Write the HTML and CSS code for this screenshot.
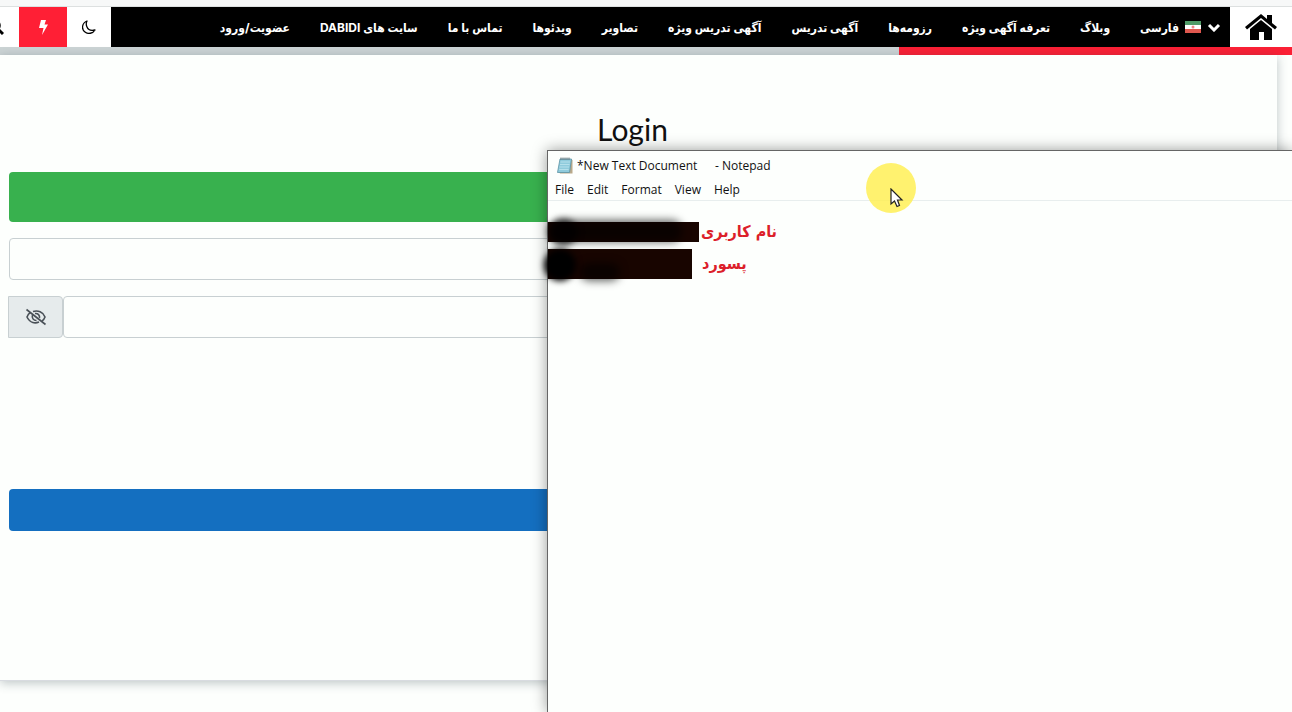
FILE: index.html
```
<!DOCTYPE html>
<html lang="fa">
<head>
	<meta charset="UTF-8">
	<title>Login</title>
	<link rel="stylesheet" href="styles.css">
</head>
<body>
	<div class="topline"></div>
	<header class="header" dir="rtl">
		<a class="home" href="#" aria-label="خانه">
			<svg width="32" height="26" viewBox="0 0 32 26">
				<path d="M5 15 L16 6 L27 15 V26 H19 V18 H14 V26 H5 Z"/>
				<path d="M16 0 L22 5 V1 H27 V9 L32 13 L30 15.500 L16 4 L2 15.500 L0 13 Z"/>
			</svg>
		</a>
		<nav class="nav">
			<button class="lang" type="button">
				<svg width="14" height="9" viewBox="0 0 14 9"><path d="M2 2 L7 7 L12 2" fill="none" stroke="#fff" stroke-width="3"/></svg>
				<svg width="16" height="12" viewBox="0 0 16 12">
					<rect width="16" height="4" fill="#4f9b67"/>
					<rect y="4" width="16" height="4" fill="#fff"/>
					<rect y="8" width="16" height="4" fill="#e0584f"/>
					<circle cx="8" cy="6" r="1.500" fill="#e88"/>
				</svg>
				<span>فارسی</span>
			</button>
			<a href="#">وبلاگ</a>
			<a href="#">تعرفه آگهی ویژه</a>
			<a href="#">رزومه‌ها</a>
			<a href="#">آگهی تدریس</a>
			<a href="#">آگهی تدریس ویژه</a>
			<a href="#">تصاویر</a>
			<a href="#">ویدئوها</a>
			<a href="#">تماس با ما</a>
			<a href="#">سایت های DABIDI</a>
			<a href="#">عضویت/ورود</a>
		</nav>
		<div class="tools">
			<button class="tool moon" type="button" aria-label="حالت شب">
				<svg width="14" height="14" viewBox="0 0 14 14"><path d="M5 1 C0 3 -1 9 3 12 C6 14.500 11 13.500 13 10 C9 11 6 9.500 5 7 C4 5 4 3 5 1 Z" fill="none" stroke="#000" stroke-width="1.300" stroke-linejoin="round"/></svg>
			</button>
			<button class="tool bolt" type="button" aria-label="تازه‌ها">
				<svg width="9" height="15" viewBox="0 0 9 15"><path d="M2 0 H7 L5.500 4.500 H9 L3 15 L4.500 8 H0 Z" fill="#fff"/></svg>
			</button>
			<button class="tool" type="button" aria-label="جستجو">
				<svg width="18" height="16" viewBox="0 0 18 16"><circle cx="8.500" cy="6.500" r="5" fill="none" stroke="#000" stroke-width="2.500"/><path d="M12 10 L17 15" stroke="#000" stroke-width="3"/></svg>
			</button>
		</div>
	</header>
	<div class="progress" dir="rtl"><div class="progress-bar"></div></div>

	<main class="panel">
		<form class="login">
			<h1>Login</h1>
			<button class="btn green" type="button" aria-label="Register"></button>
			<input class="field" type="text" aria-label="Username">
			<div class="group">
				<button class="eye" type="button" aria-label="Show password">
					<svg width="20" height="18" viewBox="0 0 20 18" fill="none" stroke="#495057" stroke-width="1.600">
						<path d="M4.500 4.500 C2.500 5.500 1.500 7.500 1 9 C4 15.500 9.500 15.500 13 14"/>
						<path d="M7 3.500 C12 2 17 4 19 9 C18.500 10.500 17.500 12 16 13"/>
						<path d="M6.500 7 C5.500 10 7.500 12.500 10.500 12.500 M9 5.500 C12 5 14 7.500 13.500 10"/>
						<path d="M0.500 1.500 L19.500 16.500"/>
					</svg>
				</button>
				<input class="field" type="password" aria-label="Password">
			</div>
			<button class="btn blue" type="submit" aria-label="Login"></button>
		</form>
	</main>

	<section class="notepad">
		<div class="title">
			<svg width="16" height="17" viewBox="0 0 16 17">
				<path d="M13 2 L15.500 3 V16.500 H3 L2 15 Z" fill="#b9a98a"/>
				<path d="M3 2 H14.500 L12.500 15.500 H0.500 Z" fill="#8fcbdc" stroke="#5c93a5" stroke-width="0.800"/>
				<path d="M3.500 5 H13 M3 7.500 H12.500 M2.600 10 H12 M2.200 12.500 H11.600" stroke="#b9e2ec" stroke-width="0.900"/>
				<path d="M4 0.500 V3 M6 0.500 V3 M8 0.500 V3 M10 0.500 V3 M12 0.500 V3" stroke="#5f6d72" stroke-width="0.900"/>
			</svg>
			<span class="doc">*New Text Document</span>
			<span>- Notepad</span>
		</div>
		<div class="menu">
			<button type="button">File</button>
			<button type="button">Edit</button>
			<button type="button">Format</button>
			<button type="button">View</button>
			<button type="button">Help</button>
		</div>
		<div class="text">
			<div class="line">
				<span class="mask user"></span>
				<span dir="rtl">نام کاربری</span>
			</div>
			<div class="line">
				<span class="mask pass"></span>
				<span dir="rtl">پسورد</span>
			</div>
		</div>
	</section>

	<div class="pointer">
		<svg width="14" height="20" viewBox="0 0 14 20"><path d="M1 1 V16 L4.500 13 L7 18.500 L9.500 17.500 L7.500 12 H12 Z" fill="#fff" stroke="#222" stroke-width="1.200"/></svg>
	</div>
</body>
</html>
```
FILE: styles.css
```
*{
	padding: 0;
	margin: 0;
	box-sizing: border-box;
}
body{
	position: relative;
	min-height: 100vh;
	overflow: hidden;
	background: #fdfffd;
	font-family: "Open Sans", "DejaVu Sans", sans-serif;
	color: #111;
}
button{
	border: 0;
	background: none;
	font: inherit;
	color: inherit;
}
svg{
	display: block;
	flex: none;
}
.topline{
	height: 7px;
	background: #f7f8f8;
	border-bottom: 1px solid #dde0e0;
}
/* header */
.header{
	display: flex;
	height: 40px;
	background: #fff;
}
.home{
	display: flex;
	flex: none;
	align-items: center;
	justify-content: center;
	width: 62px;
}
.nav{
	display: flex;
	flex: 1;
	align-items: center;
	gap: 30px;
	min-width: 0;
	padding: 0 9px;
	background: #000;
	color: #fff;
	font-family: Inter, "DejaVu Sans Condensed", "DejaVu Sans", sans-serif;
	font-size: 12px;
	font-weight: bold;
	white-space: nowrap;
}
.nav a{
	color: #fff;
	text-decoration: none;
}
.lang{
	display: flex;
	align-items: center;
	gap: 6px;
}
.tools{
	display: flex;
	flex: none;
	width: 111px;
	overflow: hidden;
}
.tool{
	display: flex;
	flex: none;
	align-items: center;
	justify-content: center;
	width: 48px;
}
.moon{
	width: 44px;
}
.bolt{
	background: #ff1f35;
}
.progress{
	height: 8px;
	background: #ccd4d5;
}
.progress-bar{
	width: 30.4%;
	height: 100%;
	background: #fb2035;
}
/* login form */
.panel{
	margin-right: 15px;
	padding: 54px 10px 149px 8px;
	border-bottom: 1px solid #d8dbe0;
	box-shadow: 0 2px 10px rgba(40, 60, 70, 0.3);
}
.login{
	display: flex;
	flex-direction: column;
}
h1{
	margin-bottom: 23px;
	padding-right: 10px;
	font-family: Lato, sans-serif;
	font-size: 30px;
	font-weight: normal;
	line-height: 40px;
	text-align: center;
}
.btn{
	height: 42px;
	margin-left: 1px;
	border-radius: 4px;
}
.green{
	height: 50px;
	margin-bottom: 16px;
	background: #38b14e;
}
.blue{
	margin-top: 151px;
	background: #146fc0;
}
.field{
	flex: none;
	height: 42px;
	margin-left: 1px;
	padding: 0 12px;
	border: 1px solid #c8d0d2;
	border-radius: 4px;
	background: #fdfffd;
}
.group{
	display: flex;
	margin-top: 16px;
}
.group .field{
	flex: 1;
	margin-left: 0;
}
.eye{
	display: flex;
	align-items: center;
	justify-content: center;
	width: 55px;
	border: 1px solid #c8d0d2;
	border-radius: 0 4px 4px 0;
	background: #e6ebec;
}
/* notepad window */
.notepad{
	position: absolute;
	top: 150px;
	left: 547px;
	right: 0;
	bottom: 0;
	border: 1px solid #666;
	border-width: 1px 0 0 1px;
	background: #fdfffd;
	box-shadow: 0 0 14px rgba(0, 0, 0, 0.4);
	font-size: 12px;
}
.title{
	display: flex;
	align-items: center;
	gap: 4px;
	height: 28px;
	padding-left: 9px;
}
.doc{
	width: 134px;
}
.menu{
	display: flex;
	gap: 13px;
	height: 22px;
	padding-left: 7px;
	border-bottom: 1px solid #e8eeee;
	line-height: 22px;
}
.text{
	display: flex;
	flex-direction: column;
	gap: 3px;
	padding-top: 16px;
	color: #dc1f2b;
	font-family: "DejaVu Sans Condensed", "DejaVu Sans", sans-serif;
	font-size: 16px;
	font-weight: bold;
}
.line{
	display: flex;
	align-items: center;
	height: 29px;
}
.mask{
	position: relative;
	width: 151px;
	height: 20px;
	margin-right: 2px;
	background: #180500;
}
.mask::before{
	content: "";
	position: absolute;
	top: -2px;
	left: 4px;
	width: 130px;
	height: 22px;
	border-radius: 10px;
	background: rgba(0, 0, 0, 0.6);
	filter: blur(4px);
}
.pass{
	width: 144px;
	height: 30px;
	margin-right: 10px;
}
.mask::after{
	content: "";
	position: absolute;
	top: -3px;
	left: 0;
	width: 30px;
	height: 26px;
	border-radius: 50%;
	background: rgba(0, 0, 0, 0.7);
	filter: blur(3px);
}
.pass::before{
	top: 14px;
	left: 32px;
	width: 40px;
	height: 18px;
}
.pass::after{
	top: 0;
	left: -4px;
	width: 32px;
	height: 32px;
	background: #000;
}
/* highlighted mouse pointer */
.pointer{
	position: absolute;
	top: 163px;
	left: 866px;
	width: 50px;
	height: 50px;
	padding: 25px 0 0 24px;
	border-radius: 50%;
	background: rgba(255, 239, 75, 0.8);
}
```
